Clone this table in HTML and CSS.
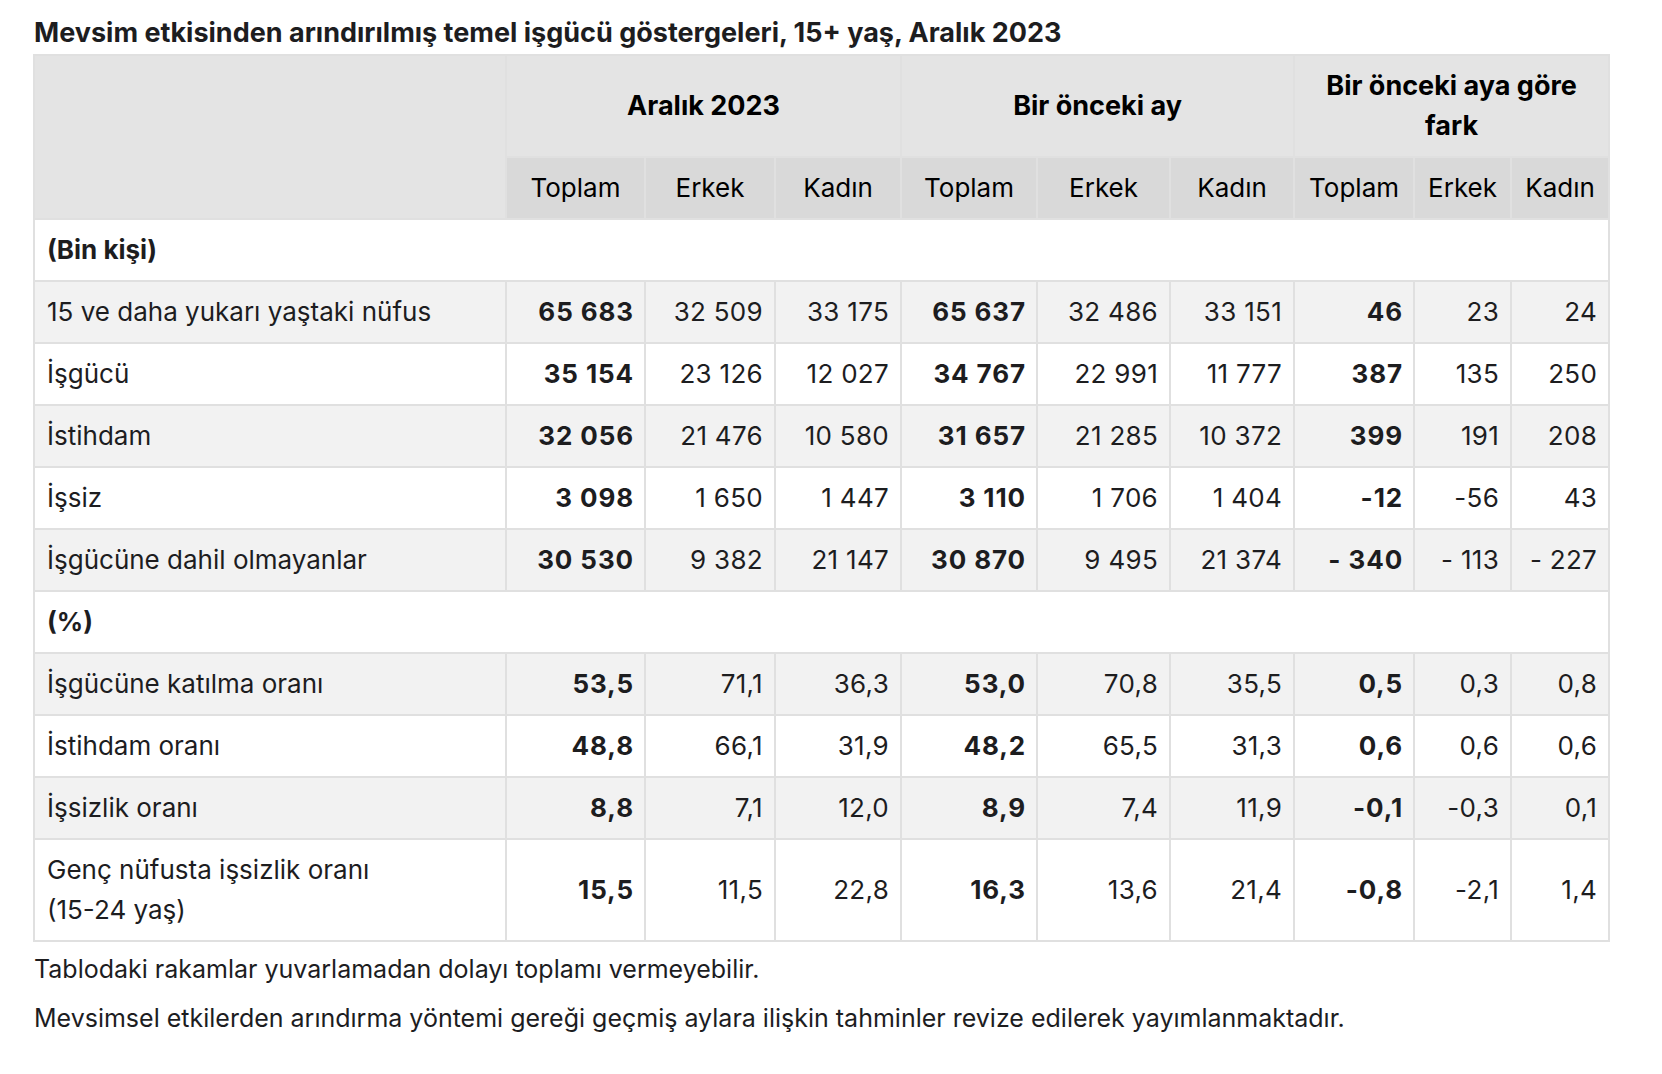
FILE: index.html
```html
<!DOCTYPE html>
<html lang="tr">
<head>
<meta charset="utf-8">
<title>Temel işgücü göstergeleri</title>
<link rel="stylesheet" href="styles.css">
</head>
<body>
<h2 class="title">Mevsim etkisinden arındırılmış temel işgücü göstergeleri, 15+ yaş, Aralık 2023</h2>
<table class="data">
  <colgroup>
    <col class="c-label">
    <col class="c1"><col class="c2"><col class="c3">
    <col class="c4"><col class="c5"><col class="c6">
    <col class="c7"><col class="c8"><col class="c9">
  </colgroup>
  <thead>
    <tr class="group">
      <th rowspan="2" class="blank"></th>
      <th colspan="3">Aralık 2023</th>
      <th colspan="3">Bir önceki ay</th>
      <th colspan="3">Bir önceki aya göre<br>fark</th>
    </tr>
    <tr class="sub">
      <th>Toplam</th><th>Erkek</th><th>Kadın</th>
      <th>Toplam</th><th>Erkek</th><th>Kadın</th>
      <th>Toplam</th><th>Erkek</th><th>Kadın</th>
    </tr>
  </thead>
  <tbody>
    <tr class="section"><td colspan="10">(Bin kişi)</td></tr>
    <tr><td class="label">15 ve daha yukarı yaştaki nüfus</td><td class="num b">65 683</td><td class="num">32 509</td><td class="num">33 175</td><td class="num b">65 637</td><td class="num">32 486</td><td class="num">33 151</td><td class="num b">46</td><td class="num">23</td><td class="num">24</td></tr>
    <tr><td class="label">İşgücü</td><td class="num b">35 154</td><td class="num">23 126</td><td class="num">12 027</td><td class="num b">34 767</td><td class="num">22 991</td><td class="num">11 777</td><td class="num b">387</td><td class="num">135</td><td class="num">250</td></tr>
    <tr><td class="label">İstihdam</td><td class="num b">32 056</td><td class="num">21 476</td><td class="num">10 580</td><td class="num b">31 657</td><td class="num">21 285</td><td class="num">10 372</td><td class="num b">399</td><td class="num">191</td><td class="num">208</td></tr>
    <tr><td class="label">İşsiz</td><td class="num b">3 098</td><td class="num">1 650</td><td class="num">1 447</td><td class="num b">3 110</td><td class="num">1 706</td><td class="num">1 404</td><td class="num b">-12</td><td class="num">-56</td><td class="num">43</td></tr>
    <tr><td class="label">İşgücüne dahil olmayanlar</td><td class="num b">30 530</td><td class="num">9 382</td><td class="num">21 147</td><td class="num b">30 870</td><td class="num">9 495</td><td class="num">21 374</td><td class="num b">- 340</td><td class="num">- 113</td><td class="num">- 227</td></tr>
    <tr class="section"><td colspan="10">(%)</td></tr>
    <tr><td class="label">İşgücüne katılma oranı</td><td class="num b">53,5</td><td class="num">71,1</td><td class="num">36,3</td><td class="num b">53,0</td><td class="num">70,8</td><td class="num">35,5</td><td class="num b">0,5</td><td class="num">0,3</td><td class="num">0,8</td></tr>
    <tr><td class="label">İstihdam oranı</td><td class="num b">48,8</td><td class="num">66,1</td><td class="num">31,9</td><td class="num b">48,2</td><td class="num">65,5</td><td class="num">31,3</td><td class="num b">0,6</td><td class="num">0,6</td><td class="num">0,6</td></tr>
    <tr><td class="label">İşsizlik oranı</td><td class="num b">8,8</td><td class="num">7,1</td><td class="num">12,0</td><td class="num b">8,9</td><td class="num">7,4</td><td class="num">11,9</td><td class="num b">-0,1</td><td class="num">-0,3</td><td class="num">0,1</td></tr>
    <tr><td class="label">Genç nüfusta işsizlik oranı<br>(15-24 yaş)</td><td class="num b">15,5</td><td class="num">11,5</td><td class="num">22,8</td><td class="num b">16,3</td><td class="num">13,6</td><td class="num">21,4</td><td class="num b">-0,8</td><td class="num">-2,1</td><td class="num">1,4</td></tr>
  </tbody>
</table>
<p class="note first">Tablodaki rakamlar yuvarlamadan dolayı toplamı vermeyebilir.</p>
<p class="note">Mevsimsel etkilerden arındırma yöntemi gereği geçmiş aylara ilişkin tahminler revize edilerek yayımlanmaktadır.</p>
</body>
</html>
```
FILE: styles.css
```css
html, body {
  background: #ffffff;
}

body {
  margin: 0;
  padding: 13px 33px;
  font-family: Inter, "Noto Sans", sans-serif;
  color: #1d1d1f;
}

.title {
  margin: 0 0 2px 1px;
  font-size: 27px;
  line-height: 39px;
  font-weight: 700;
  color: #1d1d1f;
}

.data {
  border-collapse: collapse;
  table-layout: fixed;
  width: 1575px;
  font-size: 26px;
  line-height: 40px;
}

.c-label { width: 472px; }
.c1 { width: 139px; }
.c2 { width: 130px; }
.c3 { width: 126px; }
.c4 { width: 136px; }
.c5 { width: 133px; }
.c6 { width: 124px; }
.c7 { width: 120px; }
.c8 { width: 97px; }
.c9 { width: 98px; }

.data th,
.data td {
  border: 2px solid #e0e0e0;
  padding: 10px 12px;
}

.data thead th {
  background: #e4e4e4;
  color: #000000;
  font-size: 27px;
  font-weight: 700;
  text-align: center;
}

.data thead .sub th {
  background: #d9d9d9;
  font-size: 26px;
  font-weight: 400;
  padding: 10px 4px;
}

.data tbody tr:nth-child(even) td {
  background: #f2f2f2;
}

.data td {
  color: #1d1d1f;
  white-space: nowrap;
}

.data td.label {
  text-align: left;
  white-space: normal;
}

.data td.num {
  text-align: right;
  letter-spacing: 0.3px;
  padding-right: 11px;
}

.data td.b {
  font-weight: 700;
  letter-spacing: 0.9px;
  padding-right: 10px;
}

.data .section td {
  font-weight: 700;
  text-align: left;
}

.note {
  margin: 9px 0 0 1px;
  font-size: 25px;
  line-height: 40px;
  color: #1d1d1f;
}

.note.first {
  margin-top: 7px;
}
```
